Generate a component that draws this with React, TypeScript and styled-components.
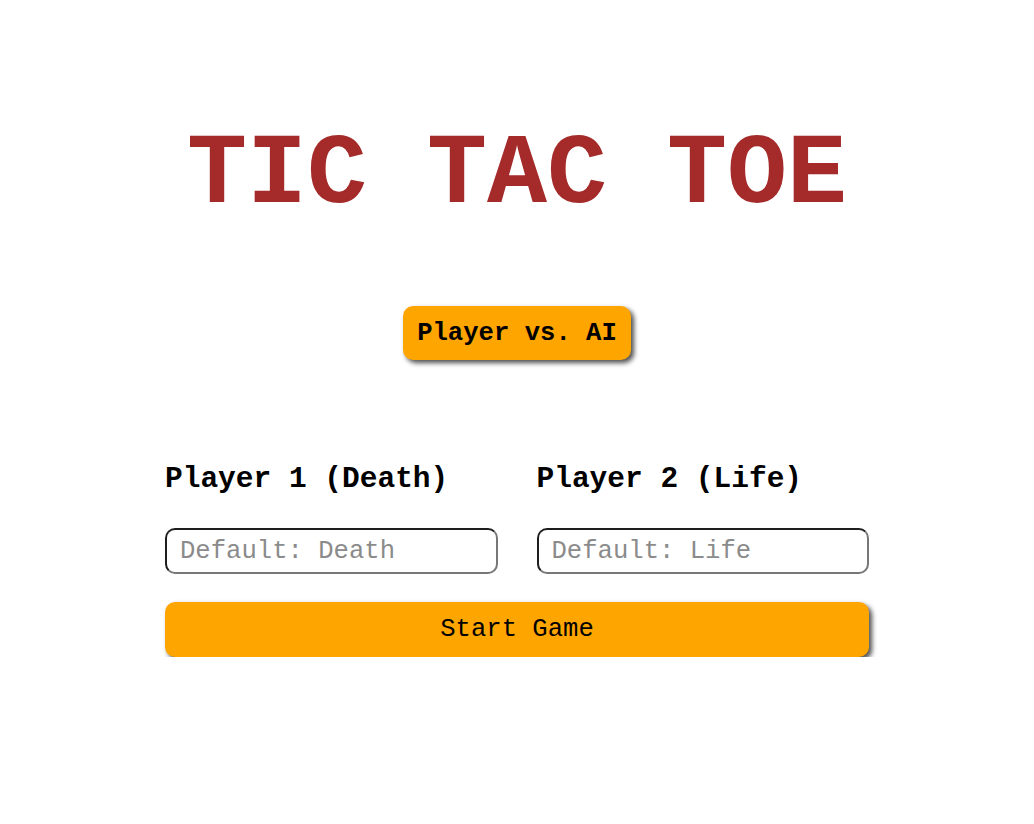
import React from "react";
import styled, { createGlobalStyle } from "styled-components";

const Global = createGlobalStyle`
  html, body { margin: 0; padding: 0; background: #ffffff; }
  body { font-family: "Liberation Mono", "Courier New", monospace; }
  * { box-sizing: border-box; }
`;

const Page = styled.main`
  display: flex;
  flex-direction: column;
  align-items: center;
  padding-top: 126px;
`;

const Title = styled.h1`
  margin: 0;
  font-family: "Courier New", "Liberation Mono", monospace;
  font-weight: 700;
  font-size: 100px;
  line-height: 100px;
  color: #a52a2a;
  letter-spacing: 0;
`;

const ModeButton = styled.button`
  margin-top: 80px;
  height: 54px;
  padding: 0 14px;
  font-family: "Courier New", "Liberation Mono", monospace;
  font-weight: 700;
  font-size: 25.6px;
  color: #000;
  background: #ffa500;
  border: none;
  border-radius: 10px;
  box-shadow: 3px 3px 5px rgba(0, 0, 0, 0.7);
  cursor: pointer;
`;

const Form = styled.form`
  margin-top: 102px;
  width: 704px;
  display: grid;
  grid-template-columns: 1fr 1fr;
  column-gap: 39px;
`;

const Field = styled.div`
  display: flex;
  flex-direction: column;
`;

const Label = styled.label`
  font-family: "Courier New", "Liberation Mono", monospace;
  font-weight: 700;
  font-size: 29.5px;
  line-height: 34px;
  color: #000;
  height: 34px;
`;

const Input = styled.input`
  margin-top: 32px;
  height: 46px;
  width: 100%;
  padding: 0 13px;
  font-family: "Courier New", "Liberation Mono", monospace;
  font-size: 25.6px;
  color: #000;
  background: #fff;
  border: 2px solid;
  border-color: #1e1e1e #777777 #777777 #1e1e1e;
  border-radius: 10px;
  outline: none;
  &::placeholder { color: #8b8b8b; }
`;

const StartButton = styled.button`
  grid-column: 1 / -1;
  margin-top: 28px;
  height: 55px;
  width: 100%;
  font-family: "Courier New", "Liberation Mono", monospace;
  font-weight: 400;
  font-size: 25.6px;
  color: #000;
  background: #ffa500;
  border: none;
  border-radius: 10px;
  box-shadow: 3px 3px 5px rgba(0, 0, 0, 0.7);
  cursor: pointer;
`;

export default function App() {
  return (
    <>
      <Global />
      <Page>
        <Title>TIC TAC TOE</Title>
        <ModeButton type="button">Player vs. AI</ModeButton>
        <Form onSubmit={(e) => e.preventDefault()}>
          <Field>
            <Label htmlFor="p1">Player 1 (Death)</Label>
            <Input id="p1" placeholder="Default: Death" />
          </Field>
          <Field>
            <Label htmlFor="p2">Player 2 (Life)</Label>
            <Input id="p2" placeholder="Default: Life" />
          </Field>
          <StartButton type="submit">Start Game</StartButton>
        </Form>
      </Page>
    </>
  );
}
